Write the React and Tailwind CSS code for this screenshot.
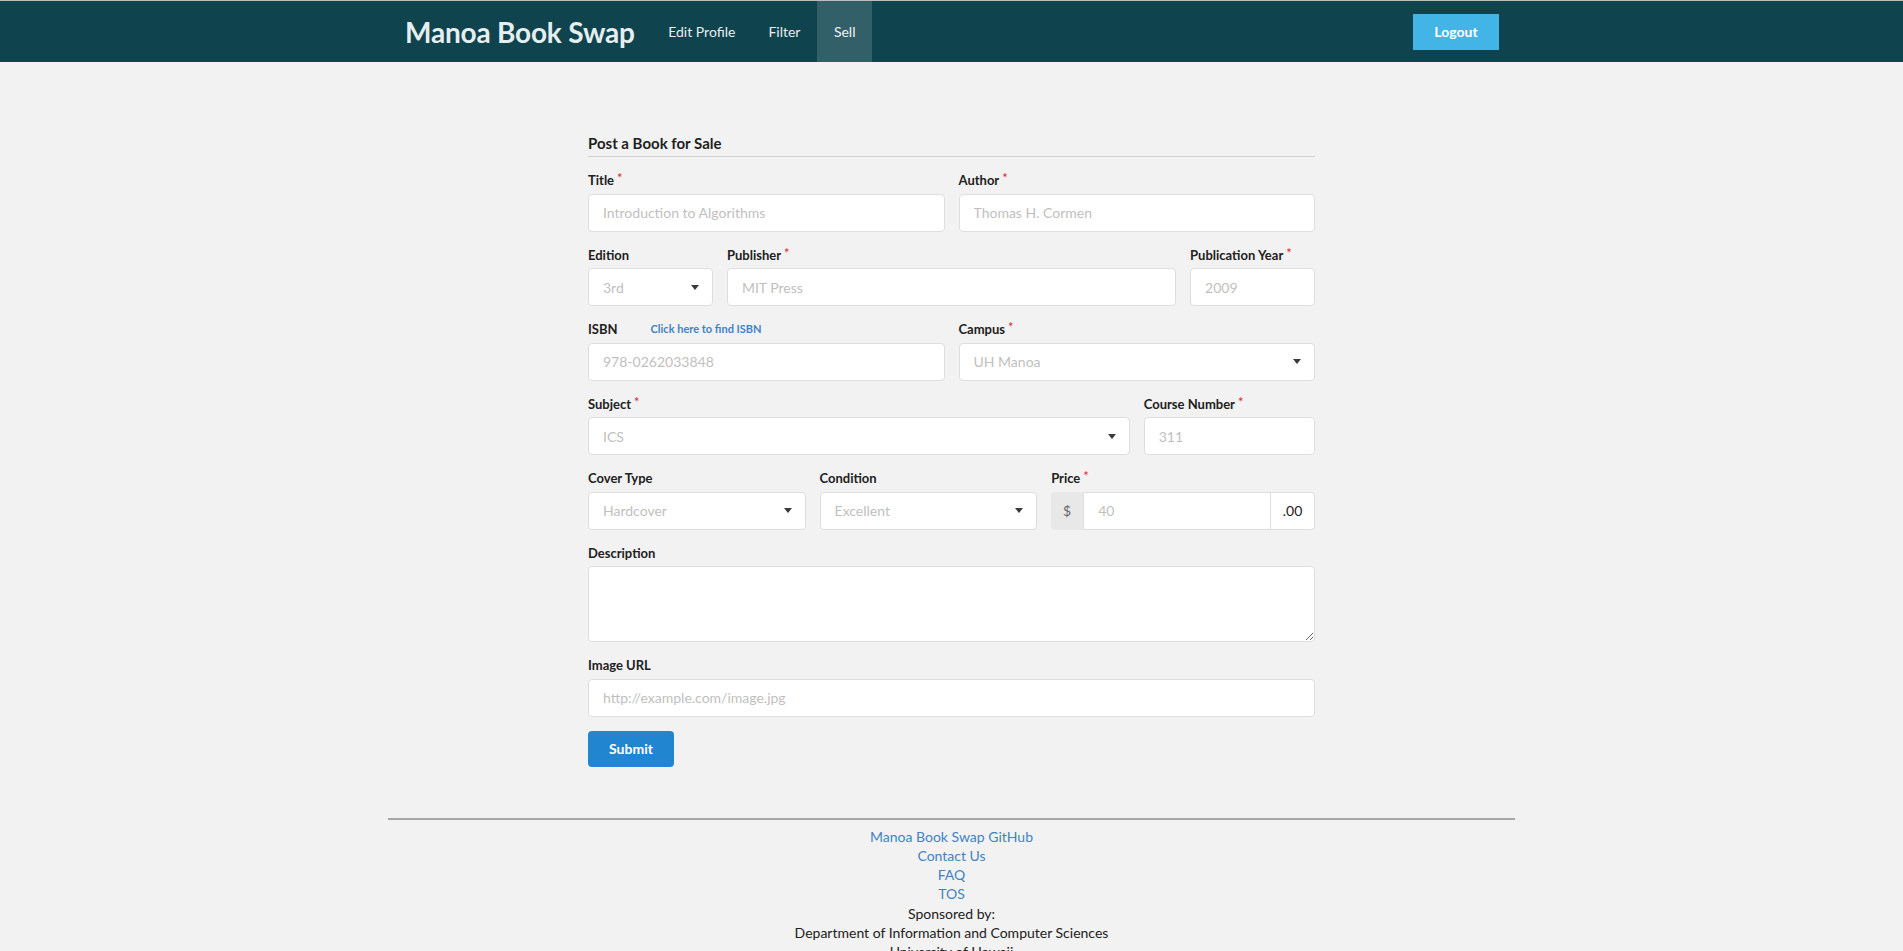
import React from "react";

const NAV = ["Edit Profile", "Filter"];

function Caret() {
  return (
    <svg width="8" height="5" viewBox="0 0 8 5" className="shrink-0">
      <polygon points="0,0 8,0 4,5" fill="#3a3a3a" />
    </svg>
  );
}

function Label({ text, required, children }) {
  return (
    <label className="flex items-center text-[13px] font-bold leading-[18.5px] mb-[4px] text-[#212121]">
      {text}
      {required && <span className="ml-[3px] relative -top-[2px] text-[#db2828] font-normal">*</span>}
      {children}
    </label>
  );
}

function TextField({ label, required, placeholder, span, extra }) {
  return (
    <div className={span}>
      <Label text={label} required={required}>{extra}</Label>
      <input
        placeholder={placeholder}
        className="w-full h-[38px] bg-white border border-[#dededf] rounded-[4px] px-[14px] text-[14px] text-[#212121] placeholder:text-[#bfbfbf] outline-none"
      />
    </div>
  );
}

function SelectField({ label, required, value, span }) {
  return (
    <div className={span}>
      <Label text={label} required={required} />
      <div className="w-full h-[38px] bg-white border border-[#dededf] rounded-[4px] pl-[14px] pr-[13px] flex items-center justify-between text-[14px] text-[#bfbfbf]">
        <span>{value}</span>
        <Caret />
      </div>
    </div>
  );
}

export default function App() {
  return (
    <div className="min-h-screen bg-[#f2f2f2] font-['Lato','Liberation_Sans',sans-serif] text-[#212121]">
      {/* navbar */}
      <div className="h-[62px] border-t border-[#bdbdbd] bg-[#0f434e]">
        <div className="w-[1127px] mx-auto h-full flex items-stretch">
          <div className="pl-[17px] pr-[17px] flex items-center text-[28px] font-bold text-[#e6eef0] tracking-[-0.2px]">
            Manoa Book Swap
          </div>
          {NAV.map((n) => (
            <div key={n} className="px-[16.5px] flex items-center text-[14px] text-[#e6eef0]">
              {n}
            </div>
          ))}
          <div className="px-[17px] flex items-center text-[14px] text-[#f0f4f5] bg-[#335f68]">Sell</div>
          <button className="ml-auto mr-4 self-center w-[86px] h-[36px] bg-[#42b4e6] text-white text-[14px] font-bold">
            Logout
          </button>
        </div>
      </div>

      {/* form */}
      <div className="w-[727px] mx-auto pt-[71.5px]">
        <h4 className="text-[15px] font-bold leading-[19px] pb-[3px] border-b border-[#d0d0d0] mb-[14.5px] text-[#1f1f1f]">
          Post a Book for Sale
        </h4>

        <div className="grid grid-cols-16 gap-x-[14px] gap-y-[14px]">
          <TextField span="col-span-8" label="Title" required placeholder="Introduction to Algorithms" />
          <TextField span="col-span-8" label="Author" required placeholder="Thomas H. Cormen" />

          <SelectField span="col-span-3" label="Edition" value="3rd" />
          <TextField span="col-span-10" label="Publisher" required placeholder="MIT Press" />
          <TextField span="col-span-3" label="Publication Year" required placeholder="2009" />

          <TextField
            span="col-span-8"
            label="ISBN"
            placeholder="978-0262033848"
            extra={<a className="ml-[33px] text-[11px] font-bold text-[#4183c4]">Click here to find ISBN</a>}
          />
          <SelectField span="col-span-8" label="Campus" required value="UH Manoa" />

          <SelectField span="col-span-12" label="Subject" required value="ICS" />
          <TextField span="col-span-4" label="Course Number" required placeholder="311" />

          <SelectField span="col-span-5" label="Cover Type" value="Hardcover" />
          <SelectField span="col-span-5" label="Condition" value="Excellent" />
          <div className="col-span-6">
            <Label text="Price" required />
            <div className="flex h-[38px]">
              <div className="w-[32px] bg-[#e8e8e8] rounded-l-[4px] flex items-center justify-center text-[14px] text-[#666]">
                $
              </div>
              <input
                placeholder="40"
                className="flex-1 min-w-0 bg-white border border-[#dededf] px-[14px] text-[14px] placeholder:text-[#bfbfbf] outline-none"
              />
              <div className="w-[44px] bg-white border border-l-0 border-[#dededf] rounded-r-[4px] flex items-center justify-center text-[14px] text-[#212121]">
                .00
              </div>
            </div>
          </div>

          <div className="col-span-16">
            <Label text="Description" />
            <textarea className="block w-full h-[76px] bg-white border border-[#dededf] rounded-[4px] px-[14px] py-[10px] text-[14px] outline-none" />
          </div>

          <TextField span="col-span-16" label="Image URL" placeholder="http://example.com/image.jpg" />
        </div>

        <button className="mt-[14px] w-[86px] h-[36px] bg-[#2185d0] rounded-[4px] text-white text-[14px] font-bold">
          Submit
        </button>
      </div>

      {/* footer */}
      <div className="w-[1127px] mx-auto mt-[51px] border-t-2 border-[#a8a8a8] pt-[7px] pb-8 text-center text-[14px] leading-[19.3px]">
        <div className="text-[#4183c4]">Manoa Book Swap GitHub</div>
        <div className="text-[#4183c4]">Contact Us</div>
        <div className="text-[#4183c4]">FAQ</div>
        <div className="text-[#4183c4]">TOS</div>
        <div>Sponsored by:</div>
        <div>Department of Information and Computer Sciences</div>
        <div>University of Hawaii</div>
      </div>
    </div>
  );
}
